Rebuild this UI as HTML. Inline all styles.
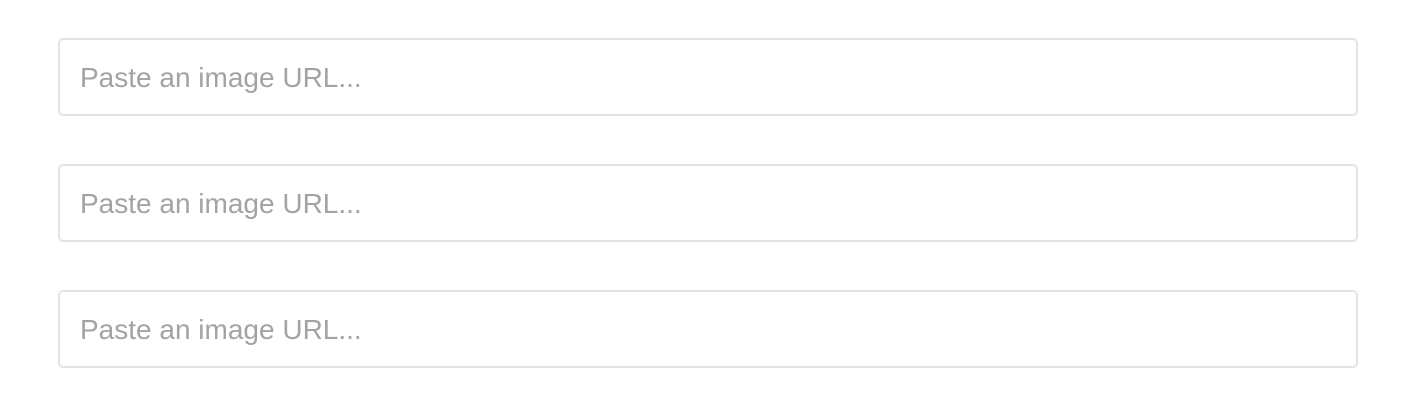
<!DOCTYPE html>
<html><head><style>
body{margin:0;background:#fff;width:1426px;height:414px;overflow:hidden;font-family:"Liberation Sans",sans-serif}
.b{position:absolute;left:58px;width:1296px;height:74px;border:2px solid #e3e3e3;border-radius:5px;box-sizing:content-box}
.b span{position:absolute;left:20px;top:23px;font-size:28px;line-height:30px;color:#a3a3a3}
</style></head><body>
<div class="b" style="top:38px"><span>Paste an image URL...</span></div>
<div class="b" style="top:164px"><span>Paste an image URL...</span></div>
<div class="b" style="top:290px"><span>Paste an image URL...</span></div>
</body></html>
